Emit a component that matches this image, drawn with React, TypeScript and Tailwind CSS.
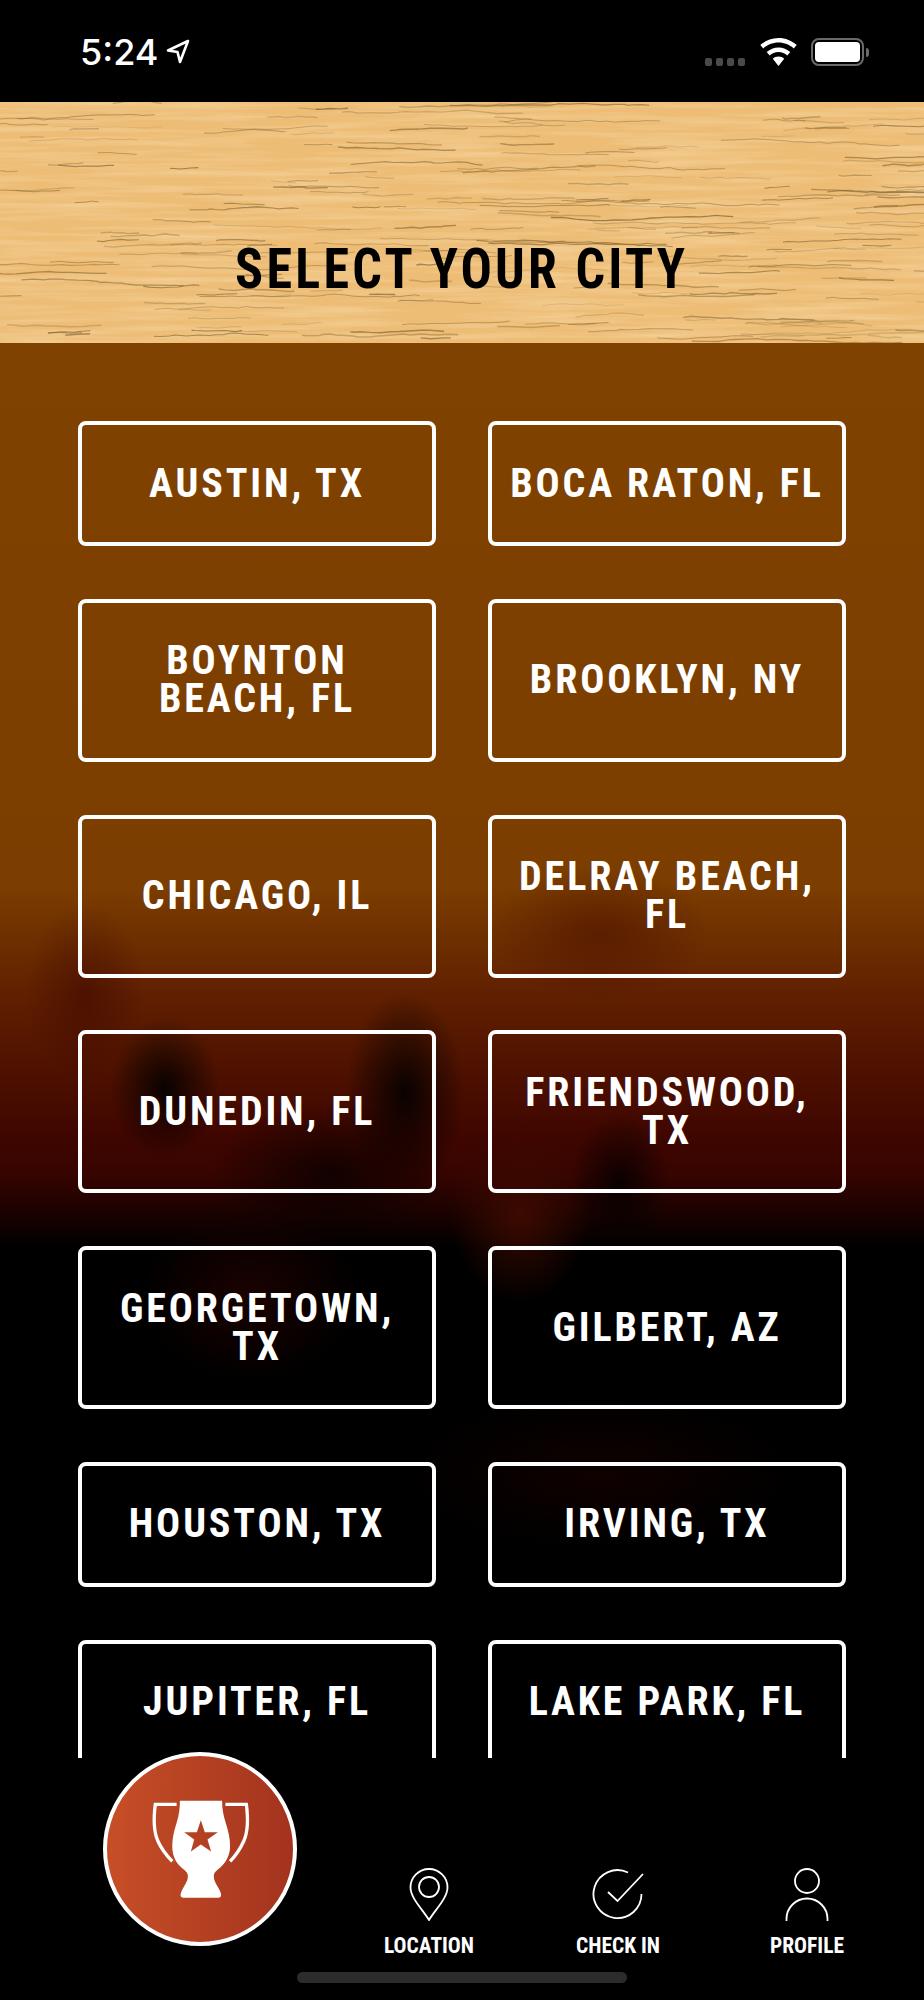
import { useMemo, type ReactNode } from 'react';

const CITIES = [
  'AUSTIN, TX',
  'BOCA RATON, FL',
  'BOYNTON BEACH, FL',
  'BROOKLYN, NY',
  'CHICAGO, IL',
  'DELRAY BEACH, FL',
  'DUNEDIN, FL',
  'FRIENDSWOOD, TX',
  'GEORGETOWN, TX',
  'GILBERT, AZ',
  'HOUSTON, TX',
  'IRVING, TX',
  'JUPITER, FL',
  'LAKE PARK, FL',
];

const NARROW = "font-['Roboto',sans-serif] [font-stretch:75%]";

// small seeded generator so the grain stays the same on every render
function makeGrain(count: number) {
  let seed = 4711;
  const rnd = () => {
    seed = (seed * 16807) % 2147483647;
    return seed / 2147483647;
  };
  const lines: { d: string; o: number; w: number }[] = [];
  for (let i = 0; i < count; i++) {
    let x = rnd() * 960 - 40;
    let y = rnd() * 241;
    const len = 20 + rnd() * rnd() * 220;
    const end = x + len;
    let d = `M${x.toFixed(1)} ${y.toFixed(1)}`;
    while (x < end) {
      x += 3 + rnd() * 10;
      y += (rnd() - 0.5) * 2.2;
      d += `L${x.toFixed(1)} ${y.toFixed(1)}`;
    }
    lines.push({ d, o: 0.2 + rnd() * 0.5, w: 0.6 + rnd() * 0.9 });
  }
  return lines;
}

function WoodGrain() {
  const lines = useMemo(() => makeGrain(230), []);
  return (
    <svg className="absolute inset-0 h-full w-full" viewBox="0 0 924 241" preserveAspectRatio="none">
      <defs>
        <filter id="wood" x="0" y="0" width="100%" height="100%">
          <feTurbulence type="fractalNoise" baseFrequency="0.008 0.16" numOctaves="4" seed="8" />
          <feColorMatrix values="0 0 0 0 1  0 0 0 0 0.86  0 0 0 0 0.62  1.4 0 0 0 -0.55" />
        </filter>
      </defs>
      <rect width="924" height="241" fill="#edbd76" />
      <rect width="924" height="241" filter="url(#wood)" opacity="0.5" />
      {lines.map((l, i) => (
        <path key={i} d={l.d} fill="none" stroke="#80602f" strokeWidth={l.w} opacity={l.o} />
      ))}
    </svg>
  );
}

function StatusBar() {
  return (
    <div className="flex h-[102px] shrink-0 items-start justify-between bg-black pl-[80px] pr-[55px] pt-[33px]">
      <div className="flex items-center gap-[8px]">
        <span className="font-['Inter',sans-serif] text-[36px] leading-[38px] font-medium text-white">5:24</span>
        <svg width="24" height="26" viewBox="0 0 24 26" fill="none" stroke="white" strokeWidth="2.6" strokeLinejoin="round">
          <path d="M22 2 2 11.5l9.5 1.5L14 23z" />
        </svg>
      </div>
      <div className="flex items-start pt-[5px]">
        <div className="mr-[15px] mt-[20px] flex gap-[4px]">
          {[0, 1, 2, 3].map((i) => (
            <span key={i} className="h-[8px] w-[7px] rounded-[2px] bg-[#4a4a4a]" />
          ))}
        </div>
        <svg className="mr-[14px]" width="37" height="28" viewBox="0 0 37 28" fill="white">
          <path d="M18.5 0C11.4 0 5 2.7.3 7.1l3 3.4C7.2 6.9 12.6 4.6 18.5 4.6s11.3 2.3 15.2 5.9l3-3.4C32 2.7 25.6 0 18.5 0z" />
          <path d="M18.5 9.4c-4.5 0-8.6 1.7-11.8 4.6l3 3.4c2.3-2.1 5.4-3.4 8.8-3.4s6.5 1.3 8.8 3.4l3-3.4c-3.2-2.9-7.3-4.6-11.8-4.6z" />
          <path d="M18.5 18.6c-2.2 0-4.2.8-5.7 2.2L18.5 28l5.7-7.2c-1.5-1.4-3.5-2.2-5.7-2.2z" />
        </svg>
        <div className="flex items-center">
          <div className="flex h-[28px] w-[53px] items-center justify-center rounded-[8px] border-2 border-[#6a6a6a]">
            <div className="h-[20px] w-[45px] rounded-[4px] bg-white" />
          </div>
          <span className="ml-[2px] h-[9px] w-[3px] rounded-r-full bg-[#6a6a6a]" />
        </div>
      </div>
    </div>
  );
}

function CityButton({ name }: { name: string }) {
  return (
    <button
      className={`rounded-[8px] border-4 border-white px-[12px] py-[39.5px] text-center text-[40px] leading-[38px] font-bold tracking-[2.9px] text-white ${NARROW}`}
    >
      {name}
    </button>
  );
}

function NavItem({ label, className, icon }: { label: string; className: string; icon: ReactNode }) {
  return (
    <div className={`flex w-[110px] flex-col items-center ${className}`}>
      {icon}
      <span className={`mt-[14px] text-[21.5px] leading-[22px] font-bold text-white ${NARROW}`}>{label}</span>
    </div>
  );
}

export default function App() {
  return (
    <div className="flex h-[2000px] w-[924px] flex-col overflow-hidden bg-black">
      <StatusBar />

      <div className="relative flex h-[241px] shrink-0 items-end justify-center pb-[44px]">
        <WoodGrain />
        <h1 className={`relative scale-x-[.93] text-[56px] leading-[60px] font-bold tracking-[3.5px] text-black ${NARROW}`}>
          SELECT YOUR CITY
        </h1>
      </div>

      <div className="h-[1415px] shrink-0 overflow-hidden bg-[radial-gradient(ellipse_55px_70px_at_165px_745px,#000000e0,transparent),radial-gradient(ellipse_60px_100px_at_405px_750px,#000000e0,transparent),radial-gradient(ellipse_120px_70px_at_330px_830px,#000000b0,transparent),radial-gradient(ellipse_60px_90px_at_85px_650px,#3a050080,transparent),radial-gradient(ellipse_110px_70px_at_600px_590px,#4a0f0090,transparent),radial-gradient(ellipse_50px_70px_at_620px_840px,#000000d0,transparent),radial-gradient(ellipse_70px_90px_at_520px_870px,#3c0a00,transparent),radial-gradient(ellipse_110px_90px_at_250px_950px,#1a0200,transparent),radial-gradient(ellipse_200px_80px_at_600px_1130px,#0f0100,transparent),linear-gradient(to_bottom,#804200_0px,#7c3e00_540px,#5e1e00_660px,#400600_790px,#380400_830px,#000000_905px,#000000_1415px)] pt-[78px]">
        <div className="grid grid-cols-[358px_358px] gap-x-[52px] gap-y-[52.8px] px-[78px]">
          {CITIES.map((city) => (
            <CityButton key={city} name={city} />
          ))}
        </div>
      </div>

      <div className="relative flex flex-1 items-start bg-black">
        <div className="absolute left-[103px] top-[-6px] flex h-[194px] w-[194px] items-center justify-center rounded-full border-4 border-white bg-gradient-to-r from-[#c74f27] to-[#a3331e]">
          <svg width="107" height="103" viewBox="200 235 320 310">
            <path
              fill="white"
              fillRule="evenodd"
              d="M298 243H425C425 265 428 285 436 310C444 335 449 355 449 380C449 405 438 425 424 440C412 452 400 458 400 470C400 488 412 500 420 518C424 528 422 535 414 535H308C300 535 298 528 302 518C310 500 322 488 322 470C322 458 310 452 298 440C284 425 275 405 275 380C275 355 280 335 288 310C296 285 298 265 298 243ZM361 302L349 338H311L341 360L331 396L361 375L392 396L381 360L412 338H373Z"
            />
            <path d="M288 254H224C218 300 218 335 232 365C242 387 258 408 275 426" fill="none" stroke="white" strokeWidth="10" />
            <path d="M435 254H498C504 300 504 335 490 365C480 387 466 408 449 426" fill="none" stroke="white" strokeWidth="10" />
          </svg>
        </div>

        <div className="ml-[374px] flex pt-[110px]">
          <NavItem
            label="LOCATION"
            className=""
            icon={
              <svg width="40" height="53" viewBox="0 0 40 53" fill="none" stroke="white" strokeWidth="1.8">
                <path d="M20 52C14 42 1.500 30 1.500 19.500A18.500 18.500 0 0 1 38.500 19.500C38.500 30 26 42 20 52Z" />
                <circle cx="20" cy="19" r="10" />
              </svg>
            }
          />
          <NavItem
            label="CHECK IN"
            className="ml-[79px]"
            icon={
              <svg width="54" height="53" viewBox="0 0 54 53" fill="none" stroke="white" strokeWidth="1.8">
                <path d="M37 4.500A24 24 0 1 0 50.500 26" />
                <path d="M17 24l9.500 9L52 6" />
              </svg>
            }
          />
          <NavItem
            label="PROFILE"
            className="ml-[79px]"
            icon={
              <svg width="44" height="53" viewBox="0 0 44 53" fill="none" stroke="white" strokeWidth="1.8">
                <circle cx="22" cy="13" r="12" />
                <path d="M1.500 53v-2a20.500 20.500 0 0 1 41 0v2" />
              </svg>
            }
          />
        </div>

        <div className="absolute bottom-[17px] left-[297px] h-[11px] w-[330px] rounded-full bg-[#2c2c2c]" />
      </div>
    </div>
  );
}
